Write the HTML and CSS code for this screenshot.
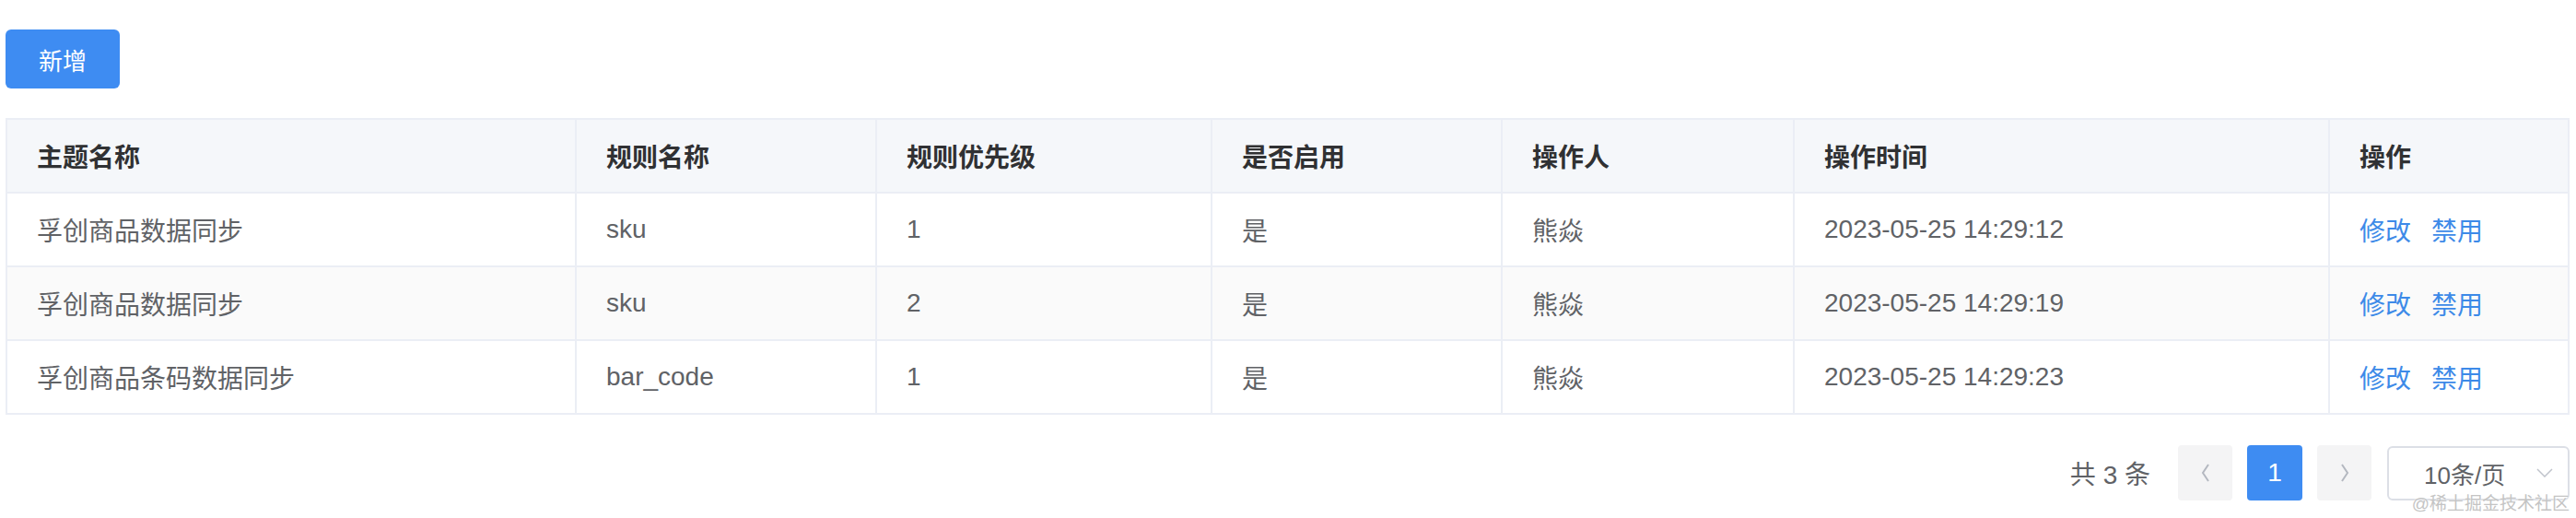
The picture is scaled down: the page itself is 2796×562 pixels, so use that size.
FILE: index.html
```html
<!DOCTYPE html>
<html lang="zh-CN">
<head>
    <meta charset="UTF-8">
    <meta name="viewport" content="width=device-width, initial-scale=1.0">
    <title>主题规则列表</title>
    <link rel="stylesheet" href="styles.css">
</head>
<body>
    <div class="page">
        <!-- 顶部操作栏 -->
        <div class="toolbar">
            <button class="btn-primary">新增</button>
        </div>

        <!-- 规则列表 -->
        <table class="grid">
            <colgroup>
                <col class="c-topic">
                <col class="c-rule">
                <col class="c-level">
                <col class="c-enable">
                <col class="c-user">
                <col class="c-time">
                <col>
            </colgroup>
            <thead>
                <tr>
                    <th>主题名称</th>
                    <th>规则名称</th>
                    <th>规则优先级</th>
                    <th>是否启用</th>
                    <th>操作人</th>
                    <th>操作时间</th>
                    <th>操作</th>
                </tr>
            </thead>
            <tbody>
                <tr>
                    <td>孚创商品数据同步</td>
                    <td>sku</td>
                    <td>1</td>
                    <td>是</td>
                    <td>熊焱</td>
                    <td>2023-05-25 14:29:12</td>
                    <td><a href="#" class="op">修改</a><a href="#" class="op">禁用</a></td>
                </tr>
                <tr class="striped">
                    <td>孚创商品数据同步</td>
                    <td>sku</td>
                    <td>2</td>
                    <td>是</td>
                    <td>熊焱</td>
                    <td>2023-05-25 14:29:19</td>
                    <td><a href="#" class="op">修改</a><a href="#" class="op">禁用</a></td>
                </tr>
                <tr>
                    <td>孚创商品条码数据同步</td>
                    <td>bar_code</td>
                    <td>1</td>
                    <td>是</td>
                    <td>熊焱</td>
                    <td>2023-05-25 14:29:23</td>
                    <td><a href="#" class="op">修改</a><a href="#" class="op">禁用</a></td>
                </tr>
            </tbody>
        </table>

        <!-- 分页 -->
        <div class="pager">
            <span class="total">共 3 条</span>
            <button class="pg-btn">
                <svg width="10" height="20" viewBox="0 0 10 20"><polyline points="8,1 2,10 8,19" fill="none" stroke="#b4b8c0" stroke-width="2"/></svg>
            </button>
            <ul class="pg-list">
                <li class="current">1</li>
            </ul>
            <button class="pg-btn">
                <svg width="10" height="20" viewBox="0 0 10 20"><polyline points="2,1 8,10 2,19" fill="none" stroke="#b4b8c0" stroke-width="2"/></svg>
            </button>
            <div class="size-select">
                <span>10条/页</span>
                <svg width="18" height="10" viewBox="0 0 18 10"><polyline points="1,1 9,9 17,1" fill="none" stroke="#c0c4cc" stroke-width="1.5"/></svg>
            </div>
        </div>

        <span class="watermark">@稀土掘金技术社区</span>
    </div>
</body>
</html>
```

FILE: styles.css
```css
/* 清除默认样式 */
* {
    margin: 0;
    padding: 0;
    box-sizing: border-box;
}
body {
    font-family: "Liberation Sans", "Noto Sans CJK SC", sans-serif;
    background: #fff;
    color: #606266;
}
ul {
    list-style: none;
}
.page {
    position: relative;
    height: 562px;
    overflow: hidden;
    padding: 32px 7px 0 6px;
}

/* 新增按钮 */
.btn-primary {
    width: 124px;
    height: 64px;
    border: none;
    border-radius: 6px;
    background: #3e8cf2;
    color: #fff;
    font-family: inherit;
    font-size: 26px;
}

/* 表格 */
.grid {
    width: 100%;
    margin-top: 32px;
    border-collapse: collapse;
    table-layout: fixed;
    border: 2px solid #ebeef5;
    font-size: 28px;
}
.c-topic { width: 618px; }
.c-rule { width: 326px; }
.c-level { width: 364px; }
.c-enable { width: 315px; }
.c-user { width: 317px; }
.c-time { width: 581px; }
.grid th,
.grid td {
    height: 80px;
    padding: 0 32px;
    border: 2px solid #ebeef5;
    text-align: left;
    white-space: nowrap;
}
.grid th {
    background: #f5f7fa;
    color: #303133;
    font-weight: 700;
}
.grid tr.striped td {
    background: #fafafa;
}
.op {
    color: #3d8ae8;
    text-decoration: none;
    margin-right: 22px;
}

/* 分页 */
.pager {
    display: flex;
    justify-content: flex-end;
    align-items: center;
    margin-top: 33px;
    height: 60px;
}
.total {
    font-size: 28px;
    margin-right: 30px;
}
.pg-btn {
    width: 59px;
    height: 60px;
    border: none;
    border-radius: 4px;
    background: #f4f4f5;
    display: flex;
    align-items: center;
    justify-content: center;
}
.pg-list li {
    width: 60px;
    height: 60px;
    margin: 0 16px;
    border-radius: 4px;
    line-height: 60px;
    text-align: center;
    font-size: 28px;
}
.pg-list li.current {
    background: #3e8cf2;
    color: #fff;
}
.size-select {
    width: 198px;
    height: 59px;
    margin-left: 17px;
    padding: 0 16px 0 38px;
    border: 2px solid #dcdfe6;
    border-radius: 6px;
    display: flex;
    align-items: center;
    justify-content: space-between;
    font-size: 26px;
}

/* 水印 */
.watermark {
    position: absolute;
    right: 7px;
    top: 531px;
    font-size: 19px;
    color: #c4c4c4;
    text-shadow: 0 0 2px #fff;
}
```
